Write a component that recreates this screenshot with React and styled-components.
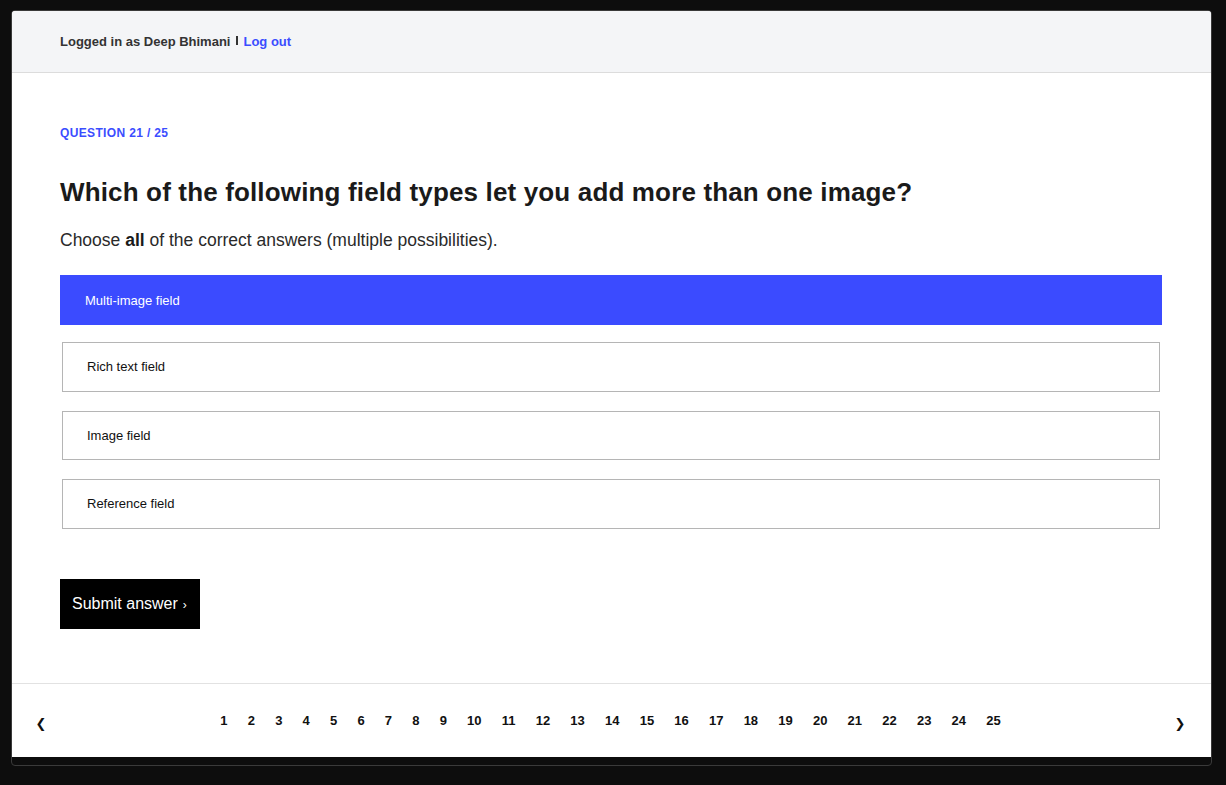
import React from "react";
import styled, { createGlobalStyle } from "styled-components";

const Global = createGlobalStyle`
  html, body { margin: 0; padding: 0; background: #0d0d0d; }
  body { font-family: "Liberation Sans", Arial, Helvetica, sans-serif; }
  * { box-sizing: border-box; }
`;

const Stage = styled.div`
  padding: 10px 14px 0 11px;
  height: 785px;
`;

const Frame = styled.div`
  width: 1201px;
  height: 756px;
  border: 1px solid #3a3a3a;
  border-radius: 4px;
  background: #0d0d0d;
  overflow: hidden;
`;

const Page = styled.div`
  background: #fff;
  height: 746px;
  display: flex;
  flex-direction: column;
`;

const Header = styled.header`
  height: 62px;
  background: #f4f5f7;
  border-bottom: 1px solid #dcdcdc;
  display: flex;
  align-items: center;
  padding: 0 48px;
  font-size: 13px;
  font-weight: 700;
  color: #333;
`;

const Sep = styled.span`
  display: inline-block;
  width: 2px;
  height: 9px;
  background: #333;
  margin: 0 5px 3px 6px;
`;

const Link = styled.a`
  color: #3b4dff;
  text-decoration: none;
`;

const Main = styled.main`
  flex: 1;
  padding: 53px 48px 0 48px;
`;

const Eyebrow = styled.div`
  font-size: 12px;
  font-weight: 700;
  color: #3b4dff;
  letter-spacing: 0.35px;
`;

const Title = styled.h1`
  margin: 36px 0 0;
  font-size: 26px;
  line-height: 32px;
  font-weight: 700;
  color: #1a1a1a;
  letter-spacing: 0.15px;
`;

const Sub = styled.p`
  margin: 21px 0 0;
  font-size: 17.5px;
  line-height: 22px;
  color: #2a2a2a;
  b { font-weight: 700; color: #1a1a1a; }
`;

const Options = styled.div`
  margin-top: 24px;
  width: 1102px;
  display: flex;
  flex-direction: column;
  gap: 15px;
`;

const Option = styled.div`
  height: ${(p) => (p.$selected ? "50px" : "49.5px")};
  margin: ${(p) => (p.$selected ? "0" : "2px 2px")};
  display: flex;
  align-items: center;
  padding-left: ${(p) => (p.$selected ? "25px" : "24px")};
  font-size: 13px;
  color: ${(p) => (p.$selected ? "#fff" : "#111")};
  background: ${(p) => (p.$selected ? "#3b4bff" : "#fff")};
  border: ${(p) => (p.$selected ? "none" : "1px solid #b5b5b5")};
`;

const Submit = styled.button`
  margin-top: 48px;
  height: 50px;
  width: 140px;
  background: #000;
  color: #fff;
  border: none;
  font-family: inherit;
  font-size: 16px;
  text-align: left;
  white-space: nowrap;
  padding: 0 12px;
  cursor: pointer;
  span { font-size: 12px; margin-left: 5px; }
`;

const Footer = styled.footer`
  height: 74px;
  border-top: 1px solid #e2e2e2;
  display: flex;
  align-items: center;
  justify-content: space-between;
  padding: 0 19px 0 17px;
`;

const Arrow = styled.button`
  background: none;
  border: none;
  font-family: "DejaVu Sans", sans-serif;
  font-size: 13px;
  color: #111;
  padding: 0 4px;
  margin-top: 6px;
  width: 24px;
`;

const Pages = styled.nav`
  display: flex;
`;

const PageNum = styled.span`
  font-size: 13px;
  font-weight: 700;
  color: #111;
  padding: 0 10.1px;
`;

const options = ["Multi-image field", "Rich text field", "Image field", "Reference field"];

export default function App() {
  return (
    <>
      <Global />
      <Stage>
        <Frame>
          <Page>
            <Header>
              Logged in as Deep Bhimani<Sep /><Link href="#">Log out</Link>
            </Header>
            <Main>
              <Eyebrow>QUESTION 21 / 25</Eyebrow>
              <Title>Which of the following field types let you add more than one image?</Title>
              <Sub>
                Choose <b>all</b> of the correct answers (multiple possibilities).
              </Sub>
              <Options>
                {options.map((o, i) => (
                  <Option key={o} $selected={i === 0}>{o}</Option>
                ))}
              </Options>
              <Submit>
                Submit answer<span>›</span>
              </Submit>
            </Main>
            <Footer>
              <Arrow>❮</Arrow>
              <Pages>
                {Array.from({ length: 25 }, (_, i) => (
                  <PageNum key={i}>{i + 1}</PageNum>
                ))}
              </Pages>
              <Arrow>❯</Arrow>
            </Footer>
          </Page>
        </Frame>
      </Stage>
    </>
  );
}
